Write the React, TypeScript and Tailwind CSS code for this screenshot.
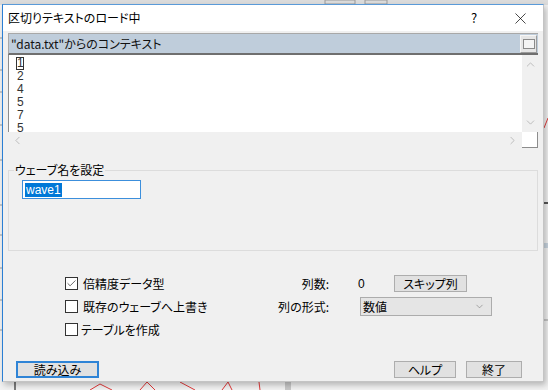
import { ChevronDown, ChevronUp, ChevronLeft, ChevronRight, X, Check } from "lucide-react";

const font = "font-['Noto_Sans_CJK_JP','Noto_Sans',sans-serif] [font-feature-settings:'palt']";

function WinButton({ label, w, primary }: { label: string; w: string; primary?: boolean }) {
  return (
    <div
      className={`${w} h-[17px] flex items-center justify-center bg-[#e1e1e1] text-[12px] leading-none text-black ${
        primary ? "border-2 border-[#2f84d6]" : "border border-[#adadad]"
      }`}
    >
      {label}
    </div>
  );
}

function CheckRow({ label, checked, gap }: { label: string; checked?: boolean; gap: string }) {
  return (
    <div className={`h-[23px] flex items-center ${gap}`}>
      <div className="w-[13px] h-[13px] border border-[#333] bg-white flex items-center justify-center">
        {checked && <Check size={11} strokeWidth={1.6} className="text-[#333]" />}
      </div>
      <span className="text-[12px] leading-none text-black">{label}</span>
    </div>
  );
}

function Backdrop() {
  return (
    <svg className="absolute inset-0" width={548} height={390}>
      <rect x={0} y={0} width={548} height={390} fill="#f2f2f2" />
      <rect x={0} y={0} width={548} height={5} fill="#dcdcdc" />
      <rect x={325} y={0} width={30} height={4} fill="none" stroke="#9a9a9a" />
      <rect x={365} y={0} width={22} height={4} fill="none" stroke="#9a9a9a" />
      {[38, 70, 92, 125, 160, 205, 235, 268, 300, 330].map((y) => (
        <line key={y} x1={0} y1={y} x2={2} y2={y} stroke="#9a9a9a" />
      ))}
      <line x1={15} y1={382} x2={15} y2={390} stroke="#555" strokeWidth={1.5} />
      <rect x={285} y={382} width={6} height={8} fill="#c8c8c8" />
      <polyline points="90,390 100,384 112,390" fill="none" stroke="#e03a3a" />
      <polyline points="140,390 147,382 155,390" fill="none" stroke="#e03a3a" />
      <polyline points="180,382 195,390" fill="none" stroke="#e03a3a" />
      <polyline points="222,390 228,382 232,390" fill="none" stroke="#e03a3a" />
      <line x1={259} y1={382} x2={260} y2={390} stroke="#e03a3a" />
      <line x1={544} y1={128} x2={548} y2={118} stroke="#e03a3a" />
      <line x1={544} y1={203} x2={548} y2={203} stroke="#222" strokeWidth={1.5} />
      <rect x={544} y={243} width={4} height={5} fill="#c8d4df" />
      <line x1={544} y1={320} x2={548} y2={320} stroke="#9a9a9a" />
    </svg>
  );
}

export default function App() {
  return (
    <div className={`relative w-[548px] h-[390px] overflow-hidden ${font}`}>
      <Backdrop />
      <div className="relative ml-[2px] mt-[4px] w-[542px] h-[378px] bg-[#f0f0f0] border border-[#c4c4c4] border-l-[#2b7fd4] border-t-[#5a9ad8] shadow-[2px_3px_6px_rgba(0,0,0,0.25)] flex flex-col">
        {/* title bar */}
        <div className="h-[26px] bg-white flex items-center">
          <span className="flex-1 pl-[5px] text-[12px] leading-none text-black">区切りテキストのロード中</span>
          <span className="w-[46px] text-center text-[13px] text-black">?</span>
          <span className="w-[46px] flex justify-center">
            <X size={19} strokeWidth={0.9} className="text-black" />
          </span>
        </div>

        {/* list box */}
        <div className="mt-[2px] mx-[5px] w-[530px] flex flex-col">
          <div className="h-[22px] bg-[#bfcddb] border-t border-l border-[#a8a8a8] border-b-2 border-b-[#6f6f6f] flex items-center">
            <span className="flex-1 pl-[2px] text-[12px] leading-none text-[#111]">"data.txt"からのコンテキスト</span>
            <div className="w-[17px] h-[18px] mr-[1px] bg-[#e6e6e6] border border-[#9c9c9c] border-t-[#f5f5f5] border-l-[#f5f5f5] flex items-center justify-center">
              <div className="w-[12px] h-[10px] border border-[#8a8a8a] bg-[#f4f4f4]" />
            </div>
          </div>
          <div className="flex h-[77px]">
            <div className="flex-1 bg-white border-l border-[#8c8c8c] pl-[7px] pt-[2px] overflow-hidden text-[12px] leading-[13px] text-[#333] font-['Liberation_Sans',sans-serif]">
              <div><span className="inline-block w-[8px] border border-[#333] leading-[11px] text-center">1</span></div>
              <div className="pl-[1px]">2</div>
              <div className="pl-[1px]">4</div>
              <div className="pl-[1px]">5</div>
              <div className="pl-[1px]">7</div>
              <div className="pl-[1px]">5</div>
            </div>
            <div className="w-[16px] bg-[#f0f0f0] flex flex-col items-center justify-between py-[3px]">
              <ChevronUp size={13} strokeWidth={1.3} className="text-[#a8a8a8]" />
              <ChevronDown size={13} strokeWidth={1.3} className="text-[#a8a8a8]" />
            </div>
          </div>
          <div className="flex h-[16px]">
            <div className="flex-1 bg-[#f0f0f0] flex items-center justify-between px-[3px]">
              <ChevronLeft size={13} strokeWidth={1.3} className="text-[#a8a8a8]" />
              <ChevronRight size={13} strokeWidth={1.3} className="text-[#a8a8a8]" />
            </div>
            <div className="w-[16px] bg-white border-r border-b border-[#8c8c8c]" />
          </div>
        </div>

        {/* wave name group */}
        <fieldset className="mt-[15px] mx-[5px] w-[530px] h-[88px] border border-[#dcdcdc] px-[13px]">
          <legend className="ml-[-8px] px-[1px] text-[12px] leading-[14px] text-black">ウェーブ名を設定</legend>
          <div className="mt-[3px] w-[119px] h-[19px] bg-white border border-[#3c8fdc] flex items-center pl-[2px]">
            <span className="bg-[#0078d7] text-white text-[12px] leading-[14px] font-['Liberation_Sans',sans-serif] px-[1px]">wave1</span>
          </div>
        </fieldset>

        {/* options */}
        <div className="mt-[21px] flex">
          <div className="ml-[62px] w-[208px] flex flex-col">
            <CheckRow label="倍精度データ型" checked gap="gap-[5px]" />
            <CheckRow label="既存のウェーブへ上書き" gap="gap-[5px]" />
            <CheckRow label="テーブルを作成" gap="gap-[3px]" />
          </div>
          <div className="flex flex-col">
            <div className="h-[23px] flex items-center">
              <span className="w-[56px] text-right text-[12px] leading-none text-black">列数:</span>
              <span className="w-[65px] pl-[29px] text-[12px] leading-none text-black font-['Liberation_Sans',sans-serif]">0</span>
              <WinButton label="スキップ列" w="w-[73px]" />
            </div>
            <div className="h-[23px] flex items-center">
              <span className="w-[56px] text-right text-[12px] leading-none text-black">列の形式:</span>
              <div className="ml-[31px] w-[132px] h-[19px] bg-[#e5e5e5] border border-[#acacac] flex items-center pl-[2px] pr-[6px]">
                <span className="flex-1 text-[12px] leading-none text-black">数値</span>
                <ChevronDown size={11} strokeWidth={1.3} className="text-[#777]" />
              </div>
            </div>
          </div>
        </div>

        {/* bottom buttons */}
        <div className="mt-[20px] flex items-center">
          <div className="ml-[13px]">
            <WinButton label="読み込み" w="w-[83px]" primary />
          </div>
          <div className="flex-1" />
          <WinButton label="ヘルプ" w="w-[62px]" />
          <div className="ml-[10px] mr-[21px]">
            <WinButton label="終了" w="w-[56px]" />
          </div>
        </div>
      </div>
    </div>
  );
}
